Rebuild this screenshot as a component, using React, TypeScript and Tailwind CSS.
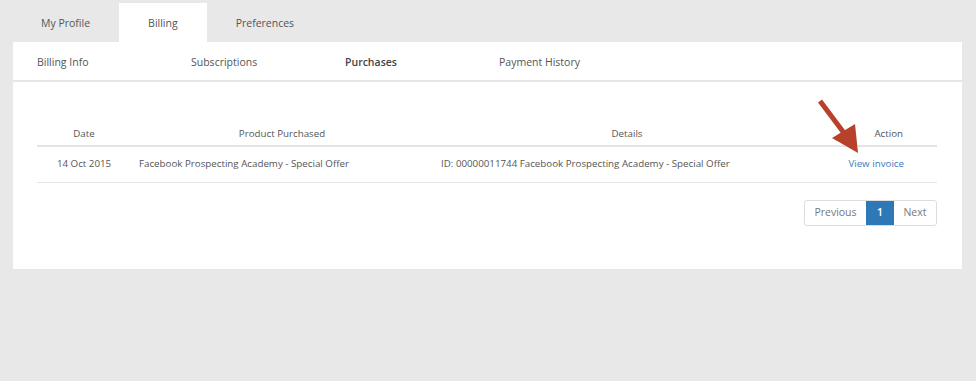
import React from "react";

const font = { fontFamily: '"Open Sans", "Liberation Sans", sans-serif' };

function Tabs() {
  return (
    <div className="flex h-[42px] pl-3 pt-[3px]">
      <div className="flex items-center px-[29px] pt-0.5 text-[#555]">My Profile</div>
      <div className="flex items-center bg-white px-[29px] pt-0.5 text-[#555]">Billing</div>
      <div className="flex items-center px-[29px] pt-0.5 text-[#555]">Preferences</div>
    </div>
  );
}

function SubTabs() {
  const items = ["Billing Info", "Subscriptions", "Purchases", "Payment History"];
  return (
    <div className="flex h-[40px] items-center border-b-2 border-[#e6e6e6] pl-6 pt-[3px]">
      {items.map((t) => (
        <div key={t} className={`w-[154px] ${t === "Purchases" ? "font-semibold text-[#444]" : "text-[#555]"}`}>
          {t}
        </div>
      ))}
    </div>
  );
}

function Arrow() {
  return (
    <svg className="absolute left-[-4px] top-[-30px]" width="46" height="60" viewBox="0 0 46 60">
      <line x1="3" y1="4" x2="27" y2="36" stroke="#b8412b" strokeWidth="5" />
      <polygon points="15,41 41,56 38,27" fill="#b8412b" />
    </svg>
  );
}

function PurchasesTable() {
  return (
    <div className="mx-6 mt-[44px] w-[900px] text-[9.75px] text-[#555]">
      <div className="grid h-[21px] grid-cols-[94px_302px_388px_116px] items-start border-b-2 border-[#e4e4e4] pt-px">
        <div className="text-center">Date</div>
        <div className="text-center">Product Purchased</div>
        <div className="text-center">Details</div>
        <div className="relative h-full pr-[34px] text-right">
          Action
          <Arrow />
        </div>
      </div>
      <div className="grid h-[36px] grid-cols-[94px_302px_388px_116px] items-center border-b border-[#e4e4e4]">
        <div className="text-center">14 Oct 2015</div>
        <div className="pl-2">Facebook Prospecting Academy - Special Offer</div>
        <div className="pl-2">ID: 00000011744 Facebook Prospecting Academy - Special Offer</div>
        <div className="pr-[33px] text-right text-[#3a7bbf]">View invoice</div>
      </div>
      <div className="mt-[17px] flex justify-end text-[10.5px]">
        <div className="flex h-[26px] overflow-hidden rounded-[3px] border border-[#dddddd]">
          <div className="flex w-[61px] items-center justify-center text-[#777]">Previous</div>
          <div className="flex w-[28px] items-center justify-center bg-[#2f78b7] font-semibold text-white">1</div>
          <div className="flex w-[42px] items-center justify-center text-[#777]">Next</div>
        </div>
      </div>
    </div>
  );
}

export default function App() {
  return (
    <div className="h-[381px] w-[976px] bg-[#e8e8e8] text-[10.5px]" style={font}>
      <Tabs />
      <div className="mx-[13px] h-[227px] w-[949px] bg-white">
        <SubTabs />
        <PurchasesTable />
      </div>
    </div>
  );
}
